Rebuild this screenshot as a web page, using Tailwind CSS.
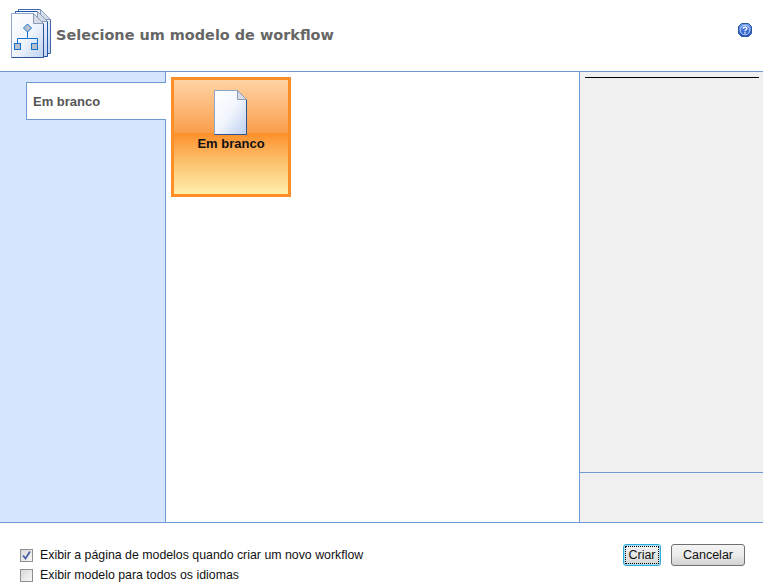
<!DOCTYPE html>
<html><head><meta charset="utf-8"><script src="https://cdn.jsdelivr.net/npm/@tailwindcss/browser@4"></script></head>
<body class="bg-white">
<div class="w-[763px] h-[583px] overflow-hidden flex flex-col font-['Liberation_Sans',sans-serif] text-[12.35px]">
  <header class="h-[72px] shrink-0 border-b border-[#6e9bd6] flex items-start relative">
    <svg class="ml-[11px] mt-[9px] shrink-0" width="42" height="51" viewBox="0 0 42 51">
      <defs><linearGradient id="p" x1="0" y1="0" x2="1" y2="1"><stop offset="0" stop-color="#fff"/><stop offset=".55" stop-color="#eef3fc"/><stop offset="1" stop-color="#bcd0f0"/></linearGradient></defs>
      <path d="M7.500 .5H29.500L39.500 10.500V44.500H7.500Z" fill="url(#p)" stroke="#3f67a8"/>
      <path d="M29.500 .5V10.500H39.500" fill="#d5dce8" stroke="#8a9bb8"/>
      <path d="M4.500 2.500H26.500L36.500 12.500V47.500H4.500Z" fill="url(#p)" stroke="#1f55a8"/>
      <path d="M26.500 2.500V12.500H36.500" fill="#d5dce8" stroke="#8a9bb8"/>
      <path d="M.5 4.500H22.500L32.500 14.500V48.500H.5Z" fill="url(#p)" stroke="#8ea6c9"/>
      <path d="M32.500 14.500V48.500H.5" fill="none" stroke="#2c5596"/>
      <path d="M22.500 4.500V14.500H32.500Z" fill="#d5dce8" stroke="#8a9bb8"/>
      <path d="M16.500 22V29.500M16.500 29.500H6.500V34M16.500 29.500H26.500V34" fill="none" stroke="#1272d0"/>
      <path d="M16.500 15L20.500 19L16.500 23L12.500 19Z" fill="#b8bfc8" stroke="#1272d0"/>
      <rect x="3.500" y="34.500" width="6" height="6" fill="#b8bfc8" stroke="#1272d0"/>
      <rect x="20.500" y="34.500" width="6" height="6" fill="#b8bfc8" stroke="#1272d0"/>
    </svg>
    <h1 class="ml-[3px] mt-[26px] font-['DejaVu_Sans',sans-serif] font-bold text-[14.45px] leading-[18px] text-[#666666]">Selecione um modelo de workflow</h1>
    <svg class="absolute left-[738px] top-[23px]" width="14" height="14" viewBox="0 0 14 14">
      <defs><linearGradient id="h" x1="0" y1="0" x2="0" y2="1"><stop offset="0" stop-color="#6f9df0"/><stop offset="1" stop-color="#1d4fc0"/></linearGradient></defs>
      <path d="M3.500 .5H10.500L13.500 3.500V10.500L10.500 13.500H3.500L.5 10.500V3.500Z" fill="url(#h)" stroke="#2a5a9c"/>
      <circle cx="7" cy="7" r="4.800" fill="none" stroke="#dbe7fb" stroke-width=".8"/>
      <path d="M5.200 5.600C5.300 3.600 8.900 3.600 8.900 5.500C8.900 6.800 7 6.800 7 8.300" fill="none" stroke="#fff" stroke-width="1.300"/>
      <rect x="6.300" y="9.200" width="1.400" height="1.400" fill="#fff"/>
    </svg>
  </header>
  <main class="h-[451px] shrink-0 border-b border-[#6e9bd6] flex">
    <nav class="w-[166px] shrink-0 bg-[#d4e5fd] border-r border-[#6e9bd6] pt-[10px] pl-[26px]">
      <div class="w-[140px] h-[38px] -mr-px relative bg-white border border-r-0 border-[#6e9bd6] pl-[6px] pt-px flex items-center font-bold text-[13px] text-[#555555]">Em branco</div>
    </nav>
    <section class="w-[413px] shrink-0 pt-[5px] pl-[5px]">
      <div class="w-[120px] h-[120px] border-[3px] border-[#fd8f26] flex flex-col items-center relative">
        <div class="h-[53px] w-full shrink-0 bg-gradient-to-b from-[#fdd3a4] to-[#f99e49]"></div>
        <div class="flex-1 w-full bg-gradient-to-b from-[#fd8f26] via-[#fbc470] to-[#ffeeab]"></div>
        <svg class="absolute left-[40px] top-[10px]" width="34" height="46" viewBox="0 0 34 46">
          <defs><linearGradient id="d" x1="0" y1="0" x2="1" y2="1"><stop offset="0" stop-color="#fff"/><stop offset=".5" stop-color="#f2f5fd"/><stop offset="1" stop-color="#bccff0"/></linearGradient></defs>
          <path d="M.5 .5H23.500L32.500 9.500V44.500H.5Z" fill="url(#d)" stroke="#8ea6c9"/>
          <path d="M32.500 9.500V44.500H.5" fill="none" stroke="#2c5596"/>
          <path d="M23.500 .5V9.500H32.500Z" fill="#d8dde6" stroke="#8a9bb8"/>
        </svg>
        <span class="absolute left-0 right-0 top-[56px] text-center font-bold text-[13px] leading-[16px] text-[#111111]">Em branco</span>
      </div>
    </section>
    <aside class="flex-1 bg-[#f0f0f0] border-l border-[#6e9bd6] flex flex-col">
      <div class="flex-1 pt-[5px] pl-[5px] pr-[4px]"><div class="h-px bg-black"></div></div>
      <div class="h-[50px] shrink-0 border-t border-[#6e9bd6]"></div>
    </aside>
  </main>
  <footer class="flex-1 flex justify-between pl-[20px] pr-[18px]">
    <div class="pt-[25px] flex flex-col gap-[6px] text-[#111111]">
      <label class="flex items-center gap-[7px] h-[14px]">
        <span class="w-[13px] h-[13px] border border-[#8e8f8f] bg-gradient-to-br from-[#d8d8d8] to-[#f8f8f8] flex items-center justify-center">
          <svg width="9" height="9" viewBox="0 0 9 9"><path d="M1 4.500L3.500 7.500L8 .5" fill="none" stroke="#4a5fa8" stroke-width="1.800"/></svg>
        </span>Exibir a página de modelos quando criar um novo workflow</label>
      <label class="flex items-center gap-[7px] h-[14px]">
        <span class="w-[13px] h-[13px] border border-[#8e8f8f] bg-gradient-to-br from-[#d8d8d8] to-[#f8f8f8]"></span>Exibir modelo para todos os idiomas</label>
    </div>
    <div class="pt-[21px] flex items-start gap-[10px]">
      <button class="w-[38px] h-[22px] rounded-[3px] border border-[#2fa8dc] bg-gradient-to-b from-[#f4f4f4] to-[#d6d6d6] p-px text-[12.5px] text-[#111111] shadow-[inset_0_0_0_1px_#a6e0f6]"><span class="flex items-center justify-center w-full h-full border border-dotted border-black">Criar</span></button>
      <button class="w-[74px] h-[22px] rounded-[3px] border border-[#707070] bg-gradient-to-b from-[#f4f4f4] via-[#ebebeb] to-[#d2d2d2] text-[12.5px] text-[#111111]">Cancelar</button>
    </div>
  </footer>
</div>
</body></html>
